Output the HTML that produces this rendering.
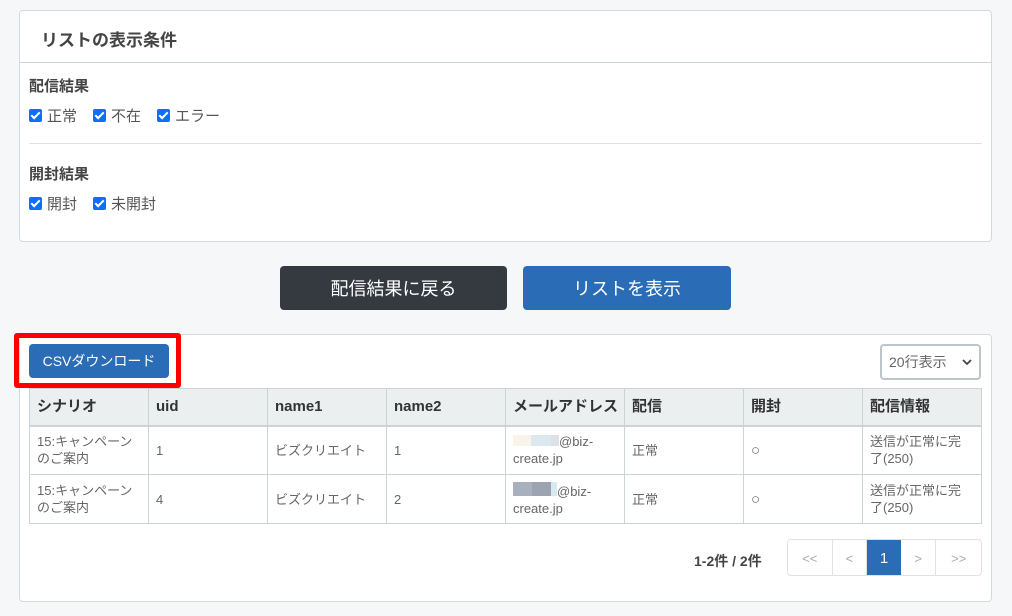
<!DOCTYPE html><html><head><meta charset="utf-8"><style>
*{box-sizing:border-box;margin:0;padding:0}
body{width:1012px;height:616px;background:#f6f7f9;font-family:"Liberation Sans","Noto Sans CJK JP",sans-serif;color:#495057;position:relative;overflow:hidden}
.a{position:absolute}
.card{background:#fff;border:1px solid #d3dadd;border-radius:4px}
.cb{display:inline-flex;align-items:center;margin-right:16px;font-size:15px;color:#555}
.cb i{width:13px;height:13px;background:#0d6efd;border-radius:2px;margin-right:5px;position:relative}
.cb i:after{content:"";position:absolute;left:4px;top:1px;width:3px;height:7px;border:solid #fff;border-width:0 2px 2px 0;transform:rotate(45deg)}
h4{font-size:15px;font-weight:bold;color:#444}
.btn{color:#fff;font-size:18px;display:flex;align-items:center;justify-content:center;border-radius:4px}
table{border-collapse:collapse;font-size:13px;color:#666;table-layout:fixed}
td,th{border:1px solid #ccd3d6;width:119px;padding:0 12px 0 7px;text-align:left;vertical-align:middle;line-height:17px}
th{background:#eceff0;height:37px;font-size:15px;color:#333;border-bottom:2px solid #ccd3d6;padding:0 4px 0 7px;white-space:nowrap}
td{height:49px}
.pg{display:flex;border:1px solid #dee2e6;border-radius:4px;overflow:hidden}
.pg span{display:flex;align-items:center;justify-content:center;height:36px;border-right:1px solid #dee2e6;color:#aaa;font-size:13px}
</style></head><body>
<div class="a card" style="left:19px;top:10px;width:973px;height:232px">
 <div style="height:52px;border-bottom:1px solid #ccd3d6;padding:15px 0 0 21px;font-size:17px;font-weight:bold;color:#444">リストの表示条件</div>
 <h4 class="a" style="left:9px;top:64px">配信結果</h4>
 <div class="a" style="left:9px;top:94px"><span class="cb"><i></i>正常</span><span class="cb"><i></i>不在</span><span class="cb"><i></i>エラー</span></div>
 <div class="a" style="left:9px;top:132px;width:953px;border-top:1px solid #dde2e4"></div>
 <h4 class="a" style="left:9px;top:152px">開封結果</h4>
 <div class="a" style="left:9px;top:182px"><span class="cb"><i></i>開封</span><span class="cb"><i></i>未開封</span></div>
</div>
<div class="a btn" style="left:280px;top:266px;width:227px;height:44px;background:#343a40">配信結果に戻る</div>
<div class="a btn" style="left:523px;top:266px;width:208px;height:44px;background:#2b6cb6">リストを表示</div>
<div class="a card" style="left:19px;top:334px;width:973px;height:268px"></div>
<div class="a" style="left:14px;top:333px;width:167px;height:55px;border:5px solid #f00;border-radius:3px"></div>
<div class="a btn" style="left:29px;top:344px;width:140px;height:34px;background:#2b6cb6;font-size:14px">CSVダウンロード</div>
<div class="a" style="left:880px;top:344px;width:101px;height:36px;border:2px solid #b9c6cc;border-radius:4px;font-size:14px;color:#666;padding:0 0 0 7px;line-height:32px">20行表示<svg style="position:absolute;right:7px;top:12px" width="10" height="8" viewBox="0 0 10 8"><path d="M1 2l4 4 4-4" fill="none" stroke="#444" stroke-width="1.8"/></svg></div>
<table class="a" style="left:29px;top:388px;width:953px">
<tr><th>シナリオ</th><th>uid</th><th>name1</th><th>name2</th><th>メールアドレス</th><th>配信</th><th>開封</th><th>配信情報</th></tr>
<tr><td>15:キャンペーンのご案内</td><td>1</td><td>ビズクリエイト</td><td>1</td><td><span style="display:inline-block;width:46px;height:11px;background:linear-gradient(90deg,#f8f4ea 0 18px,#dce8ef 18px 38px,#dde1e6 38px)"></span>@biz-create.jp</td><td>正常</td><td style="font-size:15px">○</td><td>送信が正常に完了(250)</td></tr>
<tr><td>15:キャンペーンのご案内</td><td>4</td><td>ビズクリエイト</td><td>2</td><td><span style="display:inline-block;width:44px;height:14px;background:linear-gradient(90deg,#a8afbd 0 19px,#9ea3b2 19px 38px,#d8e9f0 38px)"></span>@biz-create.jp</td><td>正常</td><td style="font-size:15px">○</td><td>送信が正常に完了(250)</td></tr>
</table>
<div class="a" style="left:694px;top:551px;font-size:14px;font-weight:bold;color:#444">1-2件 / 2件</div>
<div class="a pg" style="left:787px;top:539px;width:195px;height:37px">
<span style="width:45px">&lt;&lt;</span><span style="width:35px">&lt;</span><span style="width:34px;background:#2b6cb6;color:#fff;border:0;font-size:15px">1</span><span style="width:36px">&gt;</span><span style="width:45px;border:0">&gt;&gt;</span></div>
</body></html>
